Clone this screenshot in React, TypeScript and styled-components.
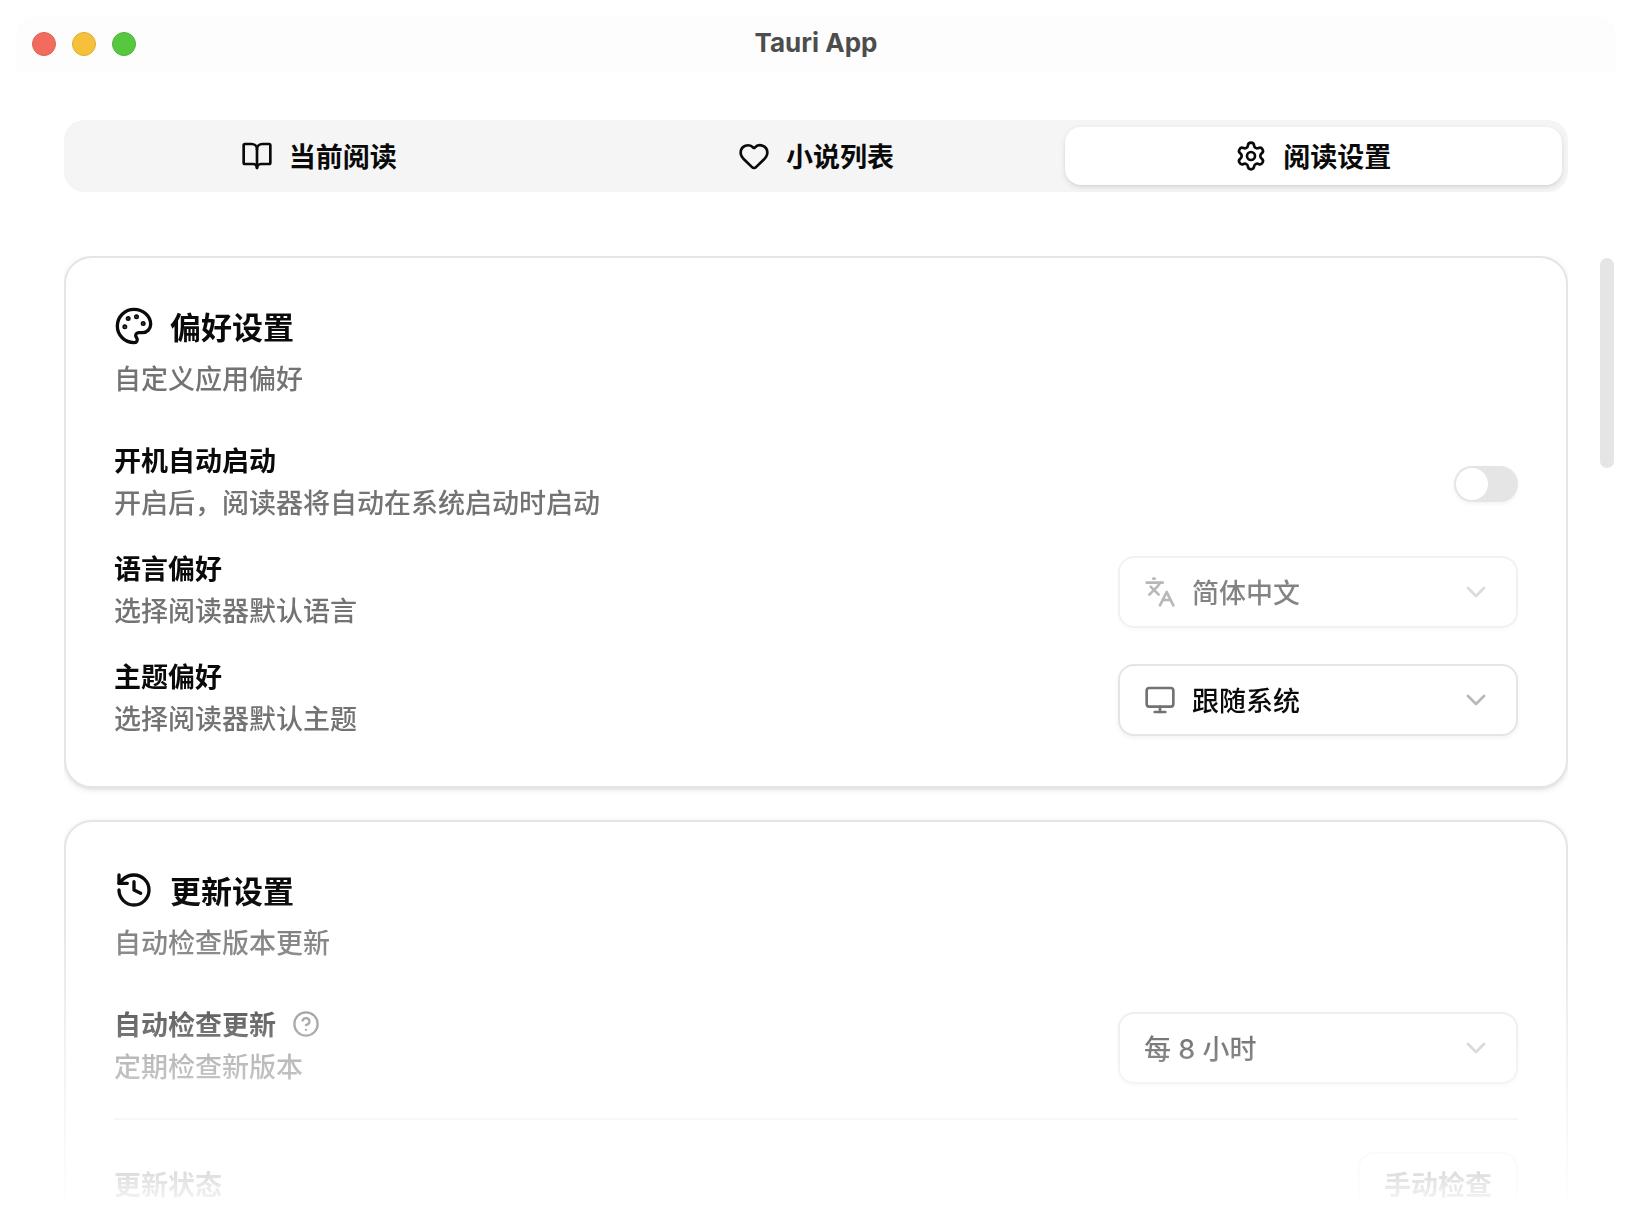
import React, { useId, useState } from "react";
import styled, { createGlobalStyle, css } from "styled-components";
import {
  BookOpen,
  ChevronDown,
  CircleQuestionMark,
  Heart,
  History,
  Languages,
  Monitor,
  Palette,
  Settings,
} from "lucide-react";

const color = {
  ink: "#0a0a0a",
  muted: "#737373",
  line: "#e5e5e5",
  track: "#f5f5f5",
};

const GlobalStyle = createGlobalStyle`
  *, *::before, *::after { box-sizing: border-box; }
  body {
    margin: 0;
    background: #ffffff;
    color: ${color.ink};
    font-family: "Noto Sans CJK SC", sans-serif;
    font-size: 27px;
    line-height: 40px;
  }
  button, select { font: inherit; color: inherit; }
  h1, h2, p { margin: 0; }
  svg { flex: none; display: block; }
`;

const Window = styled.div`
  display: flex;
  flex-direction: column;
  height: 100vh;
  padding: 16px;
`;

const TitleBar = styled.header`
  display: grid;
  grid-template-columns: 1fr auto 1fr;
  align-items: center;
  flex: none;
  height: 56px;
  padding: 0 16px;
  background: #fdfdfd;
  border-radius: 20px 20px 0 0;
`;

const Lights = styled.div`
  display: flex;
  gap: 16px;
`;

const Light = styled.button<{ $fill: string; $edge: string }>`
  width: 24px;
  height: 24px;
  padding: 0;
  border: 1px solid ${(p) => p.$edge};
  border-radius: 50%;
  background: ${(p) => p.$fill};
`;

const AppTitle = styled.h1`
  padding-bottom: 2px;
  font-family: Inter, sans-serif;
  font-size: 26px;
  line-height: 32px;
  font-weight: 700;
  color: #4d4d4d;
`;

const Main = styled.main`
  display: flex;
  flex: 1;
  flex-direction: column;
  gap: 64px;
  min-height: 0;
  padding: 48px 48px 0;
`;

const TabList = styled.div`
  display: flex;
  flex: none;
  align-items: center;
  height: 72px;
  padding: 0 6px;
  border-radius: 20px;
  background: ${color.track};
`;

const Tab = styled.button<{ $active: boolean }>`
  display: flex;
  flex: 1;
  align-items: center;
  justify-content: center;
  gap: 16px;
  height: 58px;
  padding: 0;
  border: 0;
  border-radius: 16px;
  background: none;
  font-weight: 600;
  ${(p) =>
    p.$active &&
    css`
      background: #ffffff;
      box-shadow: 0 2px 6px rgba(0, 0, 0, 0.1), 0 2px 4px -2px rgba(0, 0, 0, 0.1);
    `}
`;

const ScrollArea = styled.div`
  position: relative;
  flex: 1;
  min-height: 0;
`;

const Viewport = styled.div`
  display: flex;
  flex-direction: column;
  gap: 32px;
  height: 100%;
  overflow-y: auto;
  scrollbar-width: none;
  mask-image: linear-gradient(to bottom, #000 calc(100% - 320px), transparent);
`;

const ScrollTrack = styled.div`
  position: absolute;
  top: 0;
  right: -48px;
  bottom: 0;
  width: 20px;
  padding: 2px 2px 2px 4px;
`;

const ScrollThumb = styled.div`
  height: 22%;
  border-radius: 8px;
  background: ${color.line};
`;

const Card = styled.section`
  flex: none;
  padding: 48px;
  border: 2px solid ${color.line};
  border-radius: 28px;
  background: #ffffff;
  box-shadow: 0 2px 6px rgba(0, 0, 0, 0.1), 0 2px 4px -2px rgba(0, 0, 0, 0.1);
`;

const CardHeader = styled.div`
  display: grid;
  gap: 12px;
  margin-bottom: 48px;
`;

const CardTitle = styled.h2`
  display: flex;
  align-items: center;
  gap: 16px;
  font-size: 31px;
  line-height: 40px;
  font-weight: 700;
`;

const Muted = styled.p`
  color: ${color.muted};
  font-weight: 500;
`;

const Rows = styled.div`
  display: grid;
  gap: 32px;
`;

const Row = styled.div`
  display: flex;
  align-items: center;
  justify-content: space-between;
`;

const RowText = styled.div`
  display: grid;
  gap: 8px;
`;

const LabelLine = styled.div`
  display: flex;
  align-items: center;
  gap: 16px;
  line-height: 28px;
  font-weight: 600;
`;

const HelpButton = styled.button`
  padding: 0;
  border: 0;
  background: none;
  color: ${color.muted};
`;

const Divider = styled.hr`
  width: 100%;
  height: 2px;
  margin: 0;
  border: 0;
  background: ${color.line};
`;

const Switch = styled.input`
  display: flex;
  align-items: center;
  appearance: none;
  width: 64px;
  height: 36px;
  margin: 0;
  padding: 2px;
  border-radius: 18px;
  background: ${color.line};
  box-shadow: 0 2px 4px rgba(0, 0, 0, 0.05);

  &::before {
    content: "";
    width: 32px;
    height: 32px;
    border-radius: 50%;
    background: #ffffff;
  }

  &:checked {
    justify-content: flex-end;
    background: ${color.ink};
  }
`;

const SelectBox = styled.div<{ $disabled: boolean }>`
  display: grid;
  grid-template-columns: 26px 32px 1fr 32px 26px;
  align-items: center;
  width: 400px;
  opacity: ${(p) => (p.$disabled ? 0.5 : 1)};

  svg {
    grid-area: 1 / 2;
    z-index: 1;
    color: ${color.muted};
    pointer-events: none;
  }

  svg:last-child {
    grid-area: 1 / 4;
    opacity: 0.5;
  }
`;

const NativeSelect = styled.select<{ $icon: boolean }>`
  grid-area: 1 / 1 / 2 / -1;
  appearance: none;
  height: 72px;
  padding: 3px 72px 0 ${(p) => (p.$icon ? "72px" : "24px")};
  border: 2px solid ${color.line};
  border-radius: 16px;
  background: #ffffff;
  box-shadow: 0 2px 4px rgba(0, 0, 0, 0.05);
  font-family: Inter, "Noto Sans CJK SC", sans-serif;
  font-weight: 500;

  &:disabled {
    opacity: 1;
    color: ${color.ink};
  }
`;

const OutlineButton = styled.button`
  height: 64px;
  padding: 0 24px;
  border: 2px solid ${color.line};
  border-radius: 16px;
  background: #ffffff;
  font-weight: 600;
  box-shadow: 0 2px 4px rgba(0, 0, 0, 0.05);
`;

type PickerProps = {
  id: string;
  value: string;
  icon?: React.ReactNode;
  disabled?: boolean;
};

function Picker({ id, value, icon, disabled = false }: PickerProps) {
  return (
    <SelectBox $disabled={disabled}>
      <NativeSelect id={id} $icon={Boolean(icon)} disabled={disabled} defaultValue={value}>
        <option>{value}</option>
      </NativeSelect>
      {icon}
      <ChevronDown size={32} />
    </SelectBox>
  );
}

type SettingProps = {
  label: string;
  hint?: string;
  help?: boolean;
  control: (id: string) => React.ReactNode;
};

function Setting({ label, hint, help, control }: SettingProps) {
  const id = useId();
  return (
    <Row>
      <RowText>
        <LabelLine>
          <label htmlFor={id}>{label}</label>
          {help && (
            <HelpButton type="button">
              <CircleQuestionMark size={28} />
            </HelpButton>
          )}
        </LabelLine>
        {hint && <Muted>{hint}</Muted>}
      </RowText>
      {control(id)}
    </Row>
  );
}

const tabs = [
  { name: "当前阅读", Icon: BookOpen },
  { name: "小说列表", Icon: Heart },
  { name: "阅读设置", Icon: Settings },
];

export default function App() {
  const [active, setActive] = useState(2);

  return (
    <>
      <GlobalStyle />
      <Window>
        <TitleBar>
          <Lights>
            <Light type="button" $fill="#f16b5e" $edge="#e45f51" />
            <Light type="button" $fill="#f6c03a" $edge="#dfab32" />
            <Light type="button" $fill="#57c740" $edge="#4cb537" />
          </Lights>
          <AppTitle>Tauri App</AppTitle>
        </TitleBar>
        <Main>
          <TabList role="tablist">
            {tabs.map(({ name, Icon }, index) => (
              <Tab
                key={name}
                type="button"
                role="tab"
                aria-selected={index === active}
                $active={index === active}
                onClick={() => setActive(index)}
              >
                <Icon size={32} />
                {name}
              </Tab>
            ))}
          </TabList>
          <ScrollArea>
            <Viewport>
              <Card>
                <CardHeader>
                  <CardTitle>
                    <Palette size={40} />
                    偏好设置
                  </CardTitle>
                  <Muted>自定义应用偏好</Muted>
                </CardHeader>
                <Rows>
                  <Setting
                    label="开机自动启动"
                    hint="开启后，阅读器将自动在系统启动时启动"
                    control={(id) => <Switch id={id} type="checkbox" role="switch" />}
                  />
                  <Setting
                    label="语言偏好"
                    hint="选择阅读器默认语言"
                    control={(id) => (
                      <Picker id={id} value="简体中文" icon={<Languages size={32} />} disabled />
                    )}
                  />
                  <Setting
                    label="主题偏好"
                    hint="选择阅读器默认主题"
                    control={(id) => <Picker id={id} value="跟随系统" icon={<Monitor size={32} />} />}
                  />
                </Rows>
              </Card>
              <Card>
                <CardHeader>
                  <CardTitle>
                    <History size={40} />
                    更新设置
                  </CardTitle>
                  <Muted>自动检查版本更新</Muted>
                </CardHeader>
                <Rows>
                  <Setting
                    label="自动检查更新"
                    hint="定期检查新版本"
                    help
                    control={(id) => <Picker id={id} value="每 8 小时" />}
                  />
                  <Divider />
                  <Setting
                    label="更新状态"
                    control={(id) => (
                      <OutlineButton id={id} type="button">
                        手动检查
                      </OutlineButton>
                    )}
                  />
                </Rows>
              </Card>
            </Viewport>
            <ScrollTrack>
              <ScrollThumb />
            </ScrollTrack>
          </ScrollArea>
        </Main>
      </Window>
    </>
  );
}
